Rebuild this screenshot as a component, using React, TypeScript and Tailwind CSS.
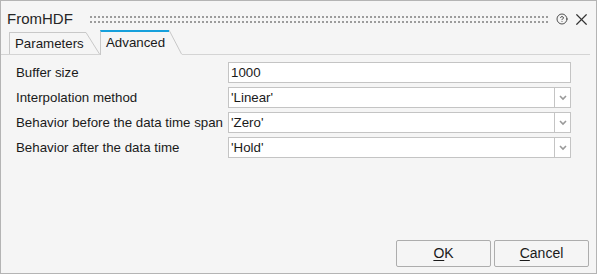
import { CircleHelp, X } from "lucide-react"

const font = "font-['Liberation_Sans','Arial',sans-serif]"

function Tab({ label, active, width, slant }: { label: string; active?: boolean; width: number; slant: number }) {
  const h = active ? 24 : 22
  return (
    <div className={`flex ${active ? "relative -mb-px z-10" : ""}`}>
      <div
        className={`flex items-center border-l border-[#c8c8c8] bg-[#f5f5f5] pl-[5px] text-[13.3px] text-[#1a1a1a] ${
          active ? "h-[25px] border-t-2 border-t-[#16a0dc] pb-[2px]" : "h-[22px] border-t pt-[1px]"
        }`}
        style={{ width }}
      >
        {label}
      </div>
      <svg width={slant} height={active ? h + 1 : h} className="block">
        <polygon points={`0,0 0,${h + 1} ${slant},${h + 1} 0,0`} fill="#f5f5f5" />
        <line x1="0" y1={active ? 0 : 0.5} x2={slant - 0.5} y2={h} stroke="#c8c8c8" strokeWidth="1" />
      </svg>
    </div>
  )
}

function Arrow() {
  return (
    <svg width="8" height="6" viewBox="0 0 8 6">
      <path d="M1 1 L4 4 L7 1" fill="none" stroke="#9a9a9a" strokeWidth="1.6" />
    </svg>
  )
}

export default function App() {
  const rows = [
    { label: "Buffer size", value: "1000", select: false },
    { label: "Interpolation method", value: "'Linear'", select: true },
    { label: "Behavior before the data time span", value: "'Zero'", select: true },
    { label: "Behavior after the data time", value: "'Hold'", select: true },
  ]

  return (
    <div className={`w-[597px] h-[274px] border border-[#b4b4b4] bg-[#f5f5f5] flex flex-col ${font}`}>
      <div className="flex items-center h-[29px] pt-[7px] pl-[6px] pr-[9px]">
        <span className="text-[15px] text-[#262626] w-[83px]">FromHDF</span>
        <div className="flex-1 flex flex-col gap-[3px] mr-[7px]">
          <div className="h-[2px] bg-[linear-gradient(90deg,#9c9c9c_50%,transparent_50%)] bg-[length:4px_2px]" />
          <div className="h-[2px] bg-[linear-gradient(90deg,#9c9c9c_50%,transparent_50%)] bg-[length:4px_2px]" />
        </div>
        <CircleHelp size={12} strokeWidth={1.7} className="text-[#333] mr-[4px]" />
        <X size={19} strokeWidth={1.5} className="text-[#333] -mr-[4px]" />
      </div>

      <div className="flex items-end h-[25px] pl-[8px] border-b border-[#d4d4d4] mr-[6px]">
        <Tab label="Parameters" width={77} slant={14} />
        <Tab label="Advanced" active width={69} slant={13} />
      </div>

      <div className="flex-1 flex flex-col gap-[4px] pt-[7px] pl-[15px]">
        {rows.map((r) => (
          <div key={r.label} className="flex items-center h-[21px]">
            <div className="w-[212px] text-[13.3px] text-[#1a1a1a] whitespace-nowrap">{r.label}</div>
            <div className="flex h-[21px] w-[343px]">
              <div className="flex-1 flex items-center h-full border border-[#c4c4c4] bg-white px-[2px] text-[13.3px] text-[#1a1a1a]">
                {r.value}
              </div>
              {r.select && (
                <div className="w-[16px] h-full flex items-center justify-center border border-l-0 border-[#c4c4c4] bg-white">
                  <Arrow />
                </div>
              )}
            </div>
          </div>
        ))}
      </div>

      <div className="flex justify-end gap-[3px] pr-[7px] pb-[6px]">
        <button className="w-[95px] h-[27px] border border-[#adadad] rounded-[2px] bg-[#f5f5f5] text-[14px] text-[#1a1a1a]">
          <span className="underline underline-offset-2">O</span>K
        </button>
        <button className="w-[95px] h-[27px] border border-[#adadad] rounded-[2px] bg-[#f5f5f5] text-[14px] text-[#1a1a1a]">
          <span className="underline underline-offset-2">C</span>ancel
        </button>
      </div>
    </div>
  )
}
